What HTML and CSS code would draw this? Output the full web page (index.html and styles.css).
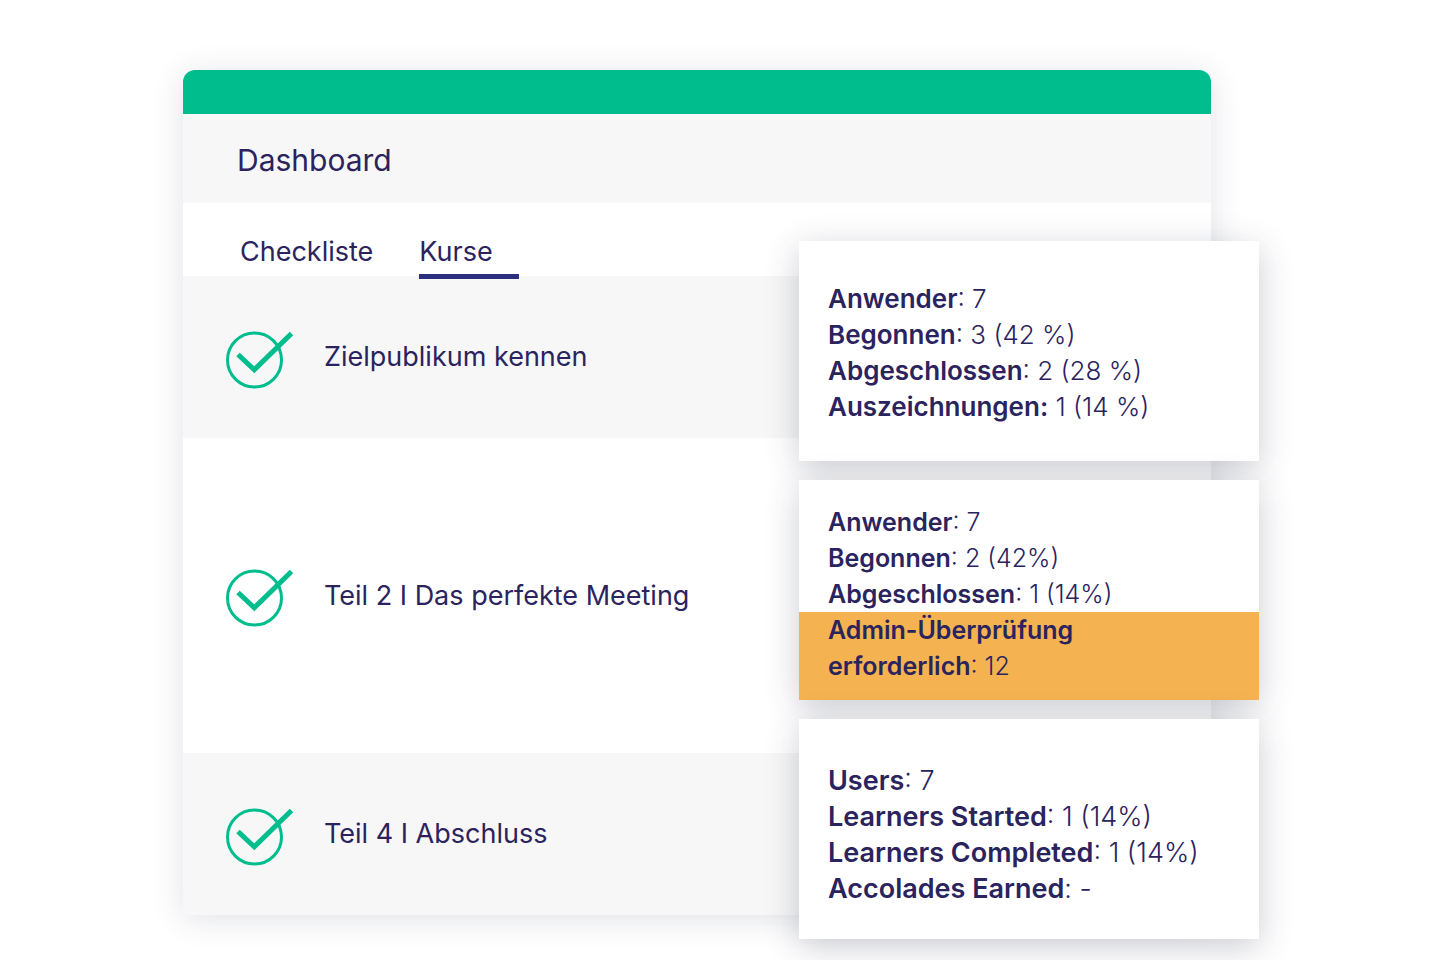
FILE: index.html
```
<!DOCTYPE html>
<html lang="de">
<head>
    <meta charset="UTF-8">
    <meta name="viewport" content="width=device-width, initial-scale=1.0">
    <title>Dashboard</title>
    <link rel="stylesheet" href="styles.css">
</head>
<body>
    <main class="panel">
        <div class="topbar"></div>
        <header class="header">
            <h1>Dashboard</h1>
        </header>
        <nav class="tabs">
            <button type="button" class="tab">Checkliste</button>
            <button type="button" class="tab active">Kurse</button>
        </nav>

        <ul class="courses">
            <li class="course">
                <svg class="check" viewBox="0 0 68 58" aria-hidden="true">
                    <circle cx="28.5" cy="29" r="27"/>
                    <path d="M12 23.5 L28.3 38.8 L65.5 2.5"/>
                </svg>
                <span>Zielpublikum kennen</span>
            </li>
            <li class="course tall">
                <svg class="check" viewBox="0 0 68 58" aria-hidden="true">
                    <circle cx="28.5" cy="29" r="27"/>
                    <path d="M12 23.5 L28.3 38.8 L65.5 2.5"/>
                </svg>
                <span>Teil 2 I Das perfekte Meeting</span>
            </li>
            <li class="course">
                <svg class="check" viewBox="0 0 68 58" aria-hidden="true">
                    <circle cx="28.5" cy="29" r="27"/>
                    <path d="M12 23.5 L28.3 38.8 L65.5 2.5"/>
                </svg>
                <span>Teil 4 I Abschluss</span>
            </li>
        </ul>

        <!-- Stat cards float over the right edge of the panel -->
        <aside class="cards">
            <section class="card">
                <p><strong>Anwender</strong>: 7</p>
                <p><strong>Begonnen</strong>: 3 (42 %)</p>
                <p><strong>Abgeschlossen</strong>: 2 (28 %)</p>
                <p><strong>Auszeichnungen:</strong> 1 (14 %)</p>
            </section>
            <section class="card review">
                <p><strong>Anwender</strong>: 7</p>
                <p><strong>Begonnen</strong>: 2 (42%)</p>
                <p><strong>Abgeschlossen</strong>: 1 (14%)</p>
                <div class="alert">
                    <p><strong>Admin-Überprüfung<br>erforderlich</strong>: 12</p>
                </div>
            </section>
            <section class="card english" lang="en">
                <p><strong>Users</strong>: 7</p>
                <p><strong>Learners Started</strong>: 1 (14%)</p>
                <p><strong>Learners Completed</strong>: 1 (14%)</p>
                <p><strong>Accolades Earned</strong>: -</p>
            </section>
        </aside>
    </main>
</body>
</html>
```

FILE: styles.css
```
:root {
    --green: #00bd8e;
    --text: #2b235e;
    --underline: #2c2f80;
    --stripe: #f7f7f7;
    --alert: #f4b250;
}

* {
    box-sizing: border-box;
    margin: 0;
    padding: 0;
}

body {
    min-height: 100vh;
    background-color: #fff;
    color: var(--text);
    font-family: Inter, "Open Sans", sans-serif;
    font-size: 27px;
    font-weight: 400;
    line-height: 36px;
    padding: 70px 229px 45px 183px;
}

.panel {
    position: relative;
    background-color: #fff;
    border-radius: 12px 12px 0 0;
    box-shadow: 0 4px 32px rgba(40, 50, 80, 0.14);
}

.topbar {
    height: 44px;
    background-color: var(--green);
    border-radius: 12px 12px 0 0;
}

.header {
    background-color: var(--stripe);
    padding: 28px 54px 25px;
}

h1 {
    font-size: 30px;
    font-weight: 400;
}

.tabs {
    display: flex;
    gap: 46px;
    padding: 31px 57px 0;
    margin-bottom: -3px;
}

.tab {
    background: none;
    border: none;
    border-bottom: 5px solid transparent;
    color: inherit;
    font: inherit;
    text-align: left;
    padding-bottom: 4px;
    cursor: pointer;
}

.tab.active {
    position: relative;
    min-width: 100px;
    border-color: var(--underline);
}

.courses {
    list-style: none;
}

.course {
    display: flex;
    align-items: center;
    gap: 30px;
    min-height: 162px;
    padding: 0 43px;
}

.course:nth-child(odd) {
    background-color: var(--stripe);
}

.course.tall {
    min-height: 315px;
}

.check {
    width: 68px;
    height: 58px;
    margin-top: 5px;
    fill: none;
    stroke: var(--green);
    stroke-width: 3;
}

.check path {
    stroke-width: 5;
}

.cards {
    position: absolute;
    top: 171px;
    right: -48px;
    width: 460px;
    display: flex;
    flex-direction: column;
    gap: 19px;
    font-size: 26px;
    font-weight: 300;
}

.card {
    min-height: 220px;
    background-color: #fff;
    box-shadow: 0 8px 32px rgba(40, 45, 70, 0.24);
    padding: 40px 29px 36px;
}

.card strong {
    font-weight: 600;
}

.card.review {
    font-size: 25px;
    padding-top: 24px;
    padding-bottom: 0;
}

.card.english {
    font-size: 27px;
    padding-top: 44px;
    padding-bottom: 32px;
}

.alert {
    background-color: var(--alert);
    margin: 0 -29px;
    padding: 0 29px 16px;
}
```
